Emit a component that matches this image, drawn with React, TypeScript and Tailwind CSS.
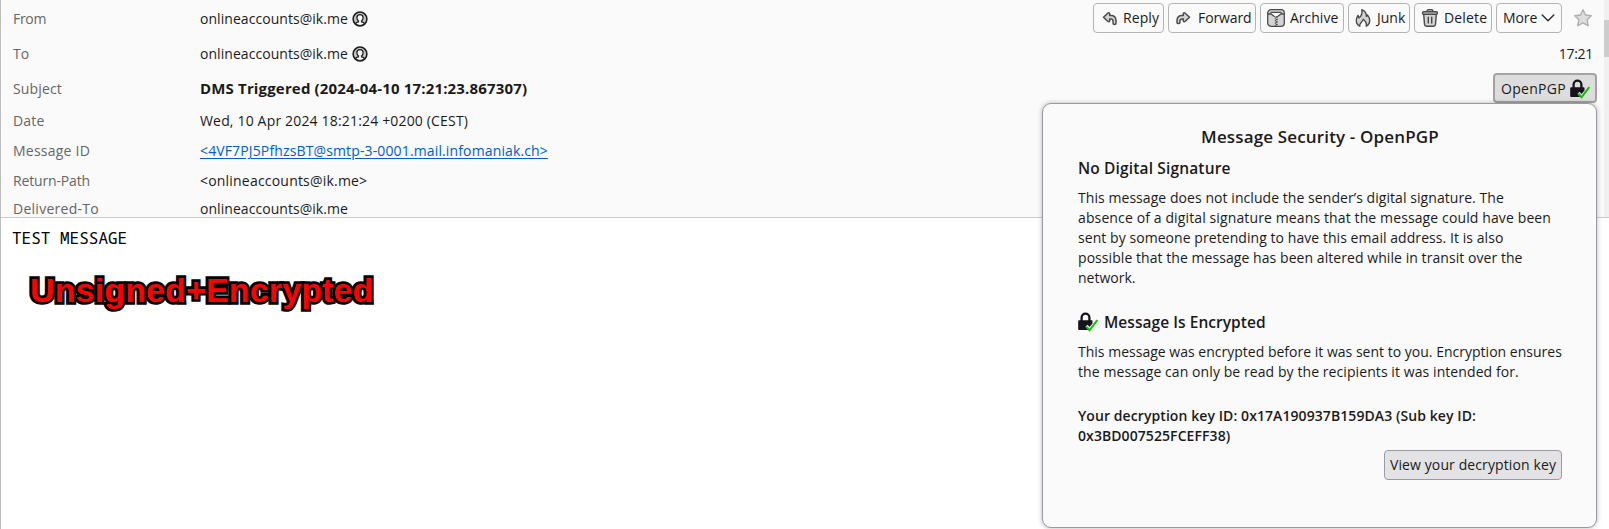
import type { ReactNode } from "react";

function ContactIcon() {
  return (
    <svg className="ml-[4px] size-4 shrink-0" viewBox="0 0 16 16" fill="none">
      <circle cx="8" cy="8" r="6.9" fill="#c4c4c4" stroke="#1a1a1a" strokeWidth="1.5" />
      <path
        d="M3.6 12.6c.4-1.3 1.5-1.5 2.9-1.8v-.9C5.5 9.2 4.9 8 4.9 6.7 4.9 4.9 6.2 3.7 8 3.7s3.1 1.2 3.1 3c0 1.3-.6 2.500-1.600 3.200v.9c1.400.3 2.500.5 2.900 1.800C11.200 13.900 9.700 14.500 8 14.500s-3.200-.6-4.400-1.900z"
        fill="#fafafa"
        stroke="#1a1a1a"
        strokeWidth="1.2"
      />
    </svg>
  );
}

function ReplyIcon() {
  return (
    <svg className="size-5 shrink-0" viewBox="0 0 20 20" fill="#d4d4d4" stroke="#4a4a4a" strokeWidth="1.5" strokeLinejoin="round">
      <path d="M8 5 3.500 9.300 8 13.500c.9.7 1.800.1 1.700-.8l-.1-1.700h1.200c1.600 0 2.300.8 2.300 2.200v2c0 1.600 2.900 1.600 2.900 0v-2.700c0-3.200-1.800-4.900-5-4.900H9.600l.1-1.800C9.800 4.900 8.900 4.300 8 5z" />
    </svg>
  );
}

function ForwardIcon() {
  return (
    <svg className="size-5 shrink-0" viewBox="0 0 20 20" fill="#d4d4d4" stroke="#4a4a4a" strokeWidth="1.5" strokeLinejoin="round">
      <path d="M12 5l4.500 4.300L12 13.500c-.9.7-1.800.1-1.700-.8l.1-1.700H9.200c-1.600 0-2.300.8-2.300 2.200v1.200c0 1.600-2.900 1.600-2.900 0v-1.900c0-3.200 1.800-4.900 5-4.900h1.400l-.1-1.800c-.1-.9.800-1.500 1.700-.8z" />
    </svg>
  );
}

function ArchiveIcon() {
  return (
    <svg className="size-5 shrink-0" viewBox="0 0 20 20" fill="none" stroke="#4a4a4a" strokeWidth="1.3" strokeLinejoin="round">
      <rect x="1.700" y="1.700" width="16.600" height="16.600" rx="3.300" fill="#d4d4d4" />
      <path d="M2 6h3l3.800 2.700M18 6h-3l-3.800 2.700" />
      <path d="M5 5.800V4.300h10v1.500" fill="#fafafa" />
      <path d="M6 5.500h8L10 8.800z" fill="#fafafa" stroke="none" />
      <path d="M10.700 8.300v10" strokeWidth="2" strokeDasharray="1.400 1.100" />
      <path d="M9.300 9.500v8.500" strokeWidth="1" strokeDasharray="1.300 1.200" />
    </svg>
  );
}

function JunkIcon() {
  return (
    <svg className="size-5 shrink-0" viewBox="0 0 20 20" fill="#d4d4d4" stroke="#4a4a4a" strokeWidth="1.400" strokeLinejoin="round">
      <path d="M6.800 18.200C4.500 17 3.300 15 3.300 12.500c0-2.200.9-3.600 1.700-5.100.7 1 .9 1.700 1 2.600C8.500 8.200 9.500 5.400 8.800 1.700c3.100 1.400 4.700 4 4.600 6.800.6-.4.900-.9 1-1.600 1.400 1.700 2.300 3.500 2.300 5.600 0 2.500-1.200 4.500-3.500 5.700.9-2.700-.3-4.600-3-6.900-.2 2.600-4.200 3.400-3.400 6.900z" />
    </svg>
  );
}

function TrashIcon() {
  return (
    <svg className="size-5 shrink-0" viewBox="0 0 20 20" fill="none" stroke="#4a4a4a" strokeWidth="1.400" strokeLinejoin="round" strokeLinecap="round">
      <path d="M3.700 6.200h12.600l-.8 10.200a2 2 0 0 1-2 1.800h-7a2 2 0 0 1-2-1.800z" fill="#d4d4d4" />
      <path d="M7 3.700V3.200c0-.9.600-1.500 1.500-1.500h3c.9 0 1.500.6 1.500 1.500v.5" />
      <rect x="2.600" y="3.800" width="14.800" height="2.400" rx="1" fill="#d4d4d4" />
      <path d="M8.300 9.300v5.800M11.700 9.300v5.800" />
    </svg>
  );
}

function ChevronIcon() {
  return (
    <svg className="ml-1 h-2 w-[14px] shrink-0" viewBox="0 0 14 8" fill="none" stroke="#2f2f2f" strokeWidth="1.400" strokeLinecap="round" strokeLinejoin="round">
      <path d="M1.200 1 7 6.800 12.800 1" />
    </svg>
  );
}

function StarIcon() {
  return (
    <svg className="size-5 shrink-0" viewBox="0 0 20 20" fill="#dedede" stroke="#b0b0b0" strokeWidth="1.400" strokeLinejoin="round">
      <path d="m10 1.700 2.500 5.300 5.800.7-4.200 4 1.100 6-5.200-2.900-5.200 2.900 1.100-6-4.200-4 5.800-.7z" />
    </svg>
  );
}

function LockOkIcon() {
  return (
    <svg className="size-5 shrink-0" viewBox="0 0 20 20" fill="none">
      <path d="M3.600 9V5.500a3.900 3.900 0 0 1 7.800 0V9" stroke="#15141a" strokeWidth="2.300" />
      <path d="M1.300 8.200h12.400c.5 0 .8.3.8.8v2.400l-3 3.600-2-2.200-2 1.900 2.800 3.400H1.300c-.7 0-1.100-.5-1.100-1.100V9.300c0-.6.400-1.100 1.100-1.100z" fill="#15141a" />
      <path d="m8.300 14.700 3.300 3.600L19.300 8" stroke="#12bc00" strokeWidth="2" />
    </svg>
  );
}

function ToolButton({ className, children }: { className: string; children: ReactNode }) {
  return (
    <button className={`flex h-[30px] shrink-0 items-center rounded-[4px] border border-[#b4b4b4] whitespace-nowrap ${className}`}>
      {children}
    </button>
  );
}

function HeaderRow({ label, labelClass, height, children }: { label: string; labelClass: string; height: string; children: ReactNode }) {
  return (
    <div className={`flex shrink-0 whitespace-nowrap ${height}`}>
      <span className={`w-[187px] shrink-0 text-[#666666] ${labelClass}`}>{label}</span>
      {children}
    </div>
  );
}

function Address() {
  return (
    <div className="flex h-5 items-center">
      <span className="tracking-[0.05px]">onlineaccounts@ik.me</span>
      <ContactIcon />
    </div>
  );
}

function SecurityPopup() {
  return (
    <section className="absolute top-[30px] right-0 flex h-[425px] w-[555px] flex-col rounded-[9px] border border-[#9a9aa4] bg-[#fafafa] pl-[35px] pr-[34px] whitespace-nowrap shadow-[0_0_5px_rgba(0,0,0,0.28)]">
      <h1 className="mt-[21px] text-center text-[17px] leading-6 font-semibold tracking-[0.15px]">Message Security - OpenPGP</h1>
      <h2 className="mt-[9px] text-[15.5px] leading-5 font-semibold tracking-[0.15px]">No Digital Signature</h2>
      <p className="mt-[10px] flex flex-col">
        <span className="tracking-[0.06px]">This message does not include the sender’s digital signature. The</span>
        <span className="tracking-[0.12px]">absence of a digital signature means that the message could have been</span>
        <span className="tracking-[0.06px]">sent by someone pretending to have this email address. It is also</span>
        <span className="tracking-[0.06px]">possible that the message has been altered while in transit over the</span>
        <span>network.</span>
      </p>
      <h2 className="mt-[24px] flex items-center gap-[6px] text-[15.5px] leading-5 font-semibold tracking-[0.05px]">
        <LockOkIcon />
        Message Is Encrypted
      </h2>
      <p className="mt-[10px] flex flex-col">
        <span className="tracking-[0.01px]">This message was encrypted before it was sent to you. Encryption ensures</span>
        <span className="tracking-[0.08px]">the message can only be read by the recipients it was intended for.</span>
      </p>
      <p className="mt-[24px] flex flex-col font-semibold tracking-[0.08px]">
        <span>Your decryption key ID: 0x17A190937B159DA3 (Sub key ID:</span>
        <span>0x3BD007525FCEFF38)</span>
      </p>
      <button className="mt-[4px] flex h-[30px] w-[178px] items-center justify-center self-end rounded-[4px] border border-[#9a9aa4] bg-[#e3e3e5] tracking-[0.11px]">
        View your decryption key
      </button>
    </section>
  );
}

export default function App() {
  return (
    <div className="flex h-[529px] w-full flex-col overflow-hidden border-l border-[#bdbdbd] bg-white font-['Open_Sans',sans-serif] text-[14px] leading-5 text-[#1a1a1a]">
      <header className="flex h-[218px] shrink-0 border-b border-[#cccccc] bg-[#fafafa]">
        <div className="flex flex-1 flex-col overflow-hidden pt-[9px] pl-[12px]">
          <HeaderRow label="From" labelClass="tracking-[-0.3px]" height="h-[35px]"><Address /></HeaderRow>
          <HeaderRow label="To" labelClass="" height="h-[35px]"><Address /></HeaderRow>
          <HeaderRow label="Subject" labelClass="tracking-[0.15px]" height="h-[32px]">
            <span className="text-[15px] leading-[18px] font-bold tracking-[0.16px]">DMS Triggered (2024-04-10 17:21:23.867307)</span>
          </HeaderRow>
          <HeaderRow label="Date" labelClass="tracking-[0.2px]" height="h-[30px]">
            <span className="tracking-[0.17px]">Wed, 10 Apr 2024 18:21:24 +0200 (CEST)</span>
          </HeaderRow>
          <HeaderRow label="Message ID" labelClass="tracking-[0.23px]" height="h-[30px]">
            <a className="text-[#0060c4] underline underline-offset-2 tracking-[0.135px]">&lt;4VF7PJ5PfhzsBT@smtp-3-0001.mail.infomaniak.ch&gt;</a>
          </HeaderRow>
          <HeaderRow label="Return-Path" labelClass="tracking-[-0.15px]" height="h-[28px]">
            <span className="tracking-[0.2px]">&lt;onlineaccounts@ik.me&gt;</span>
          </HeaderRow>
          <HeaderRow label="Delivered-To" labelClass="tracking-[0.27px]" height="h-5">
            <span className="tracking-[0.05px]">onlineaccounts@ik.me</span>
          </HeaderRow>
        </div>

        <div className="flex w-[504px] shrink-0 flex-col pt-[3px]">
          <div className="flex items-center gap-1">
            <ToolButton className="w-[71px] pl-[6px]">
              <ReplyIcon />
              <span className="ml-[3px] tracking-[0.08px]">Reply</span>
            </ToolButton>
            <ToolButton className="w-[88px] pl-[4px]">
              <ForwardIcon />
              <span className="ml-[5px] tracking-[-0.1px]">Forward</span>
            </ToolButton>
            <ToolButton className="w-[84px] pl-[5px]">
              <ArchiveIcon />
              <span className="ml-[4px]">Archive</span>
            </ToolButton>
            <ToolButton className="w-[62px] pl-[4px]">
              <JunkIcon />
              <span className="ml-[4px]">Junk</span>
            </ToolButton>
            <ToolButton className="w-[78px] pl-[5px]">
              <TrashIcon />
              <span className="ml-[4px] tracking-[0.15px]">Delete</span>
            </ToolButton>
            <ToolButton className="w-[66px] pl-[6px]">
              <span className="tracking-[-0.1px]">More</span>
              <ChevronIcon />
            </ToolButton>
            <span className="ml-[7px]"><StarIcon /></span>
          </div>
          <time className="mt-[11px] w-[500px] text-right tracking-[-0.3px]">17:21</time>
          <div className="relative mt-[9px] flex w-[504px] justify-end">
            <button className="flex h-[30px] w-[104px] items-center rounded-[4px] border-2 border-[#a4a4a4] bg-[#dddddd] pt-px pl-[6px]">
              <span className="w-[69px] text-left tracking-[0.3px]">OpenPGP</span>
              <LockOkIcon />
            </button>
            <SecurityPopup />
          </div>
        </div>

        <div className="ml-[7px] w-[5px] shrink-0 bg-[#f0f0f0] pt-5">
          <div className="h-[37px] bg-[#cdcdcd]" />
        </div>
      </header>

      <main className="flex flex-col items-start pl-[11px]">
        <pre className="mt-[10px] font-['Noto_Sans_Mono','DejaVu_Sans_Mono',monospace] text-[16px] leading-5 text-black">TEST MESSAGE</pre>
        <strong className="mt-[22px] ml-[18px] font-['Liberation_Sans',sans-serif] text-[34px] leading-10 font-bold tracking-[0.14px] text-[#ff0000] [-webkit-text-stroke:5.5px_black] [paint-order:stroke_fill] [stroke-linejoin:round]">
          Unsigned+Encrypted
        </strong>
      </main>
    </div>
  );
}
